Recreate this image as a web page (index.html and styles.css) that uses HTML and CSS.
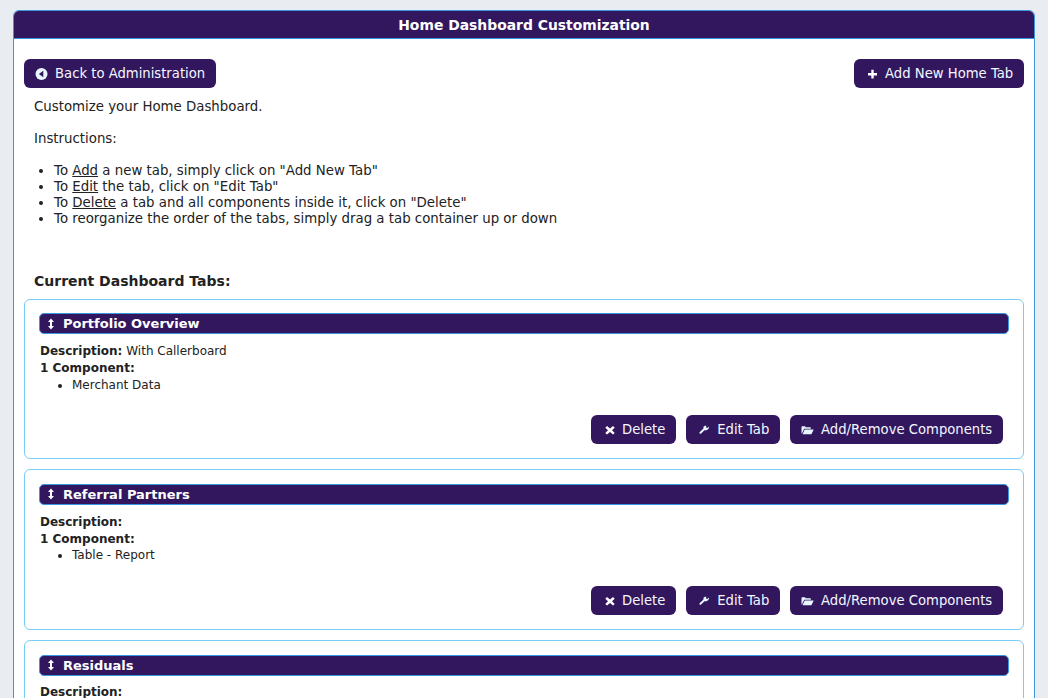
FILE: index.html
```html
<!DOCTYPE html>
<html lang="en">
<head>
<meta charset="utf-8">
<title>Home Dashboard Customization</title>
<link rel="stylesheet" href="styles.css">
</head>
<body>
<main class="panel">
  <h1 class="panel-title">Home Dashboard Customization</h1>
  <div class="panel-body">
    <div class="top-actions">
      <button class="btn"><svg class="icon" viewBox="0 0 13 12"><circle cx="6.500" cy="6" r="6" fill="#e8f6ff"/><path d="M8.300 2.800v6.400L3.900 6z" fill="#32175f"/></svg>Back to Administration</button>
      <button class="btn"><svg class="icon" viewBox="0 0 13 12"><path d="M6.300 1.800h2.400V5H12v2.400H8.700v3.200H6.300V7.400H3V5h3.300z" fill="#fff"/></svg>Add New Home Tab</button>
    </div>
    <div class="intro">
      <p>Customize your Home Dashboard.</p>
      <p>Instructions:</p>
      <ul>
        <li>To <u>Add</u> a new tab, simply click on "Add New Tab"</li>
        <li>To <u>Edit</u> the tab, click on "Edit Tab"</li>
        <li>To <u>Delete</u> a tab and all components inside it, click on "Delete"</li>
        <li>To reorganize the order of the tabs, simply drag a tab container up or down</li>
      </ul>
    </div>
    <h2 class="section-title">Current Dashboard Tabs:</h2>

    <section class="card">
      <h3 class="card-title"><svg class="drag" viewBox="0 0 8 12"><path d="M4 .5 7 4H5v4h2l-3 3.500L1 8h2V4H1z" fill="#fff"/></svg>Portfolio Overview</h3>
      <div class="card-text"><b>Description:</b> With Callerboard</div>
      <div class="card-text"><b>1 Component:</b></div>
      <ul class="components"><li>Merchant Data</li></ul>
      <div class="card-actions">
        <button class="btn"><svg class="icon" viewBox="0 0 13 12"><path d="M5 2 8 4.600 11 2l1.700 1.700L10 6.300l2.700 2.600-1.700 1.700L8 8l-3 2.600-1.700-1.700L6 6.300 3.300 3.700z" fill="#fff"/></svg>Delete</button>
        <button class="btn"><svg class="icon" viewBox="0 0 13 12"><path d="M12 2.400 10.200 4.100 9 3.600l.3-1.800C8.100 1.400 6.900 2 6.500 3.100c-.2.500-.1 1 0 1.400L2.800 8c-.5.500-.5 1.100-.1 1.500.4.400 1 .4 1.400-.1L7.500 6.200c1.400.4 2.900-.2 3.800-1.300.6-.7.800-1.600.7-2.500z" fill="#e8f6ff"/></svg>Edit Tab</button>
        <button class="btn"><svg class="icon" viewBox="0 0 13 12"><path d="M.5 9.500V3c0-.5.300-.8.700-.8h2.700l1 1h4.300c.4 0 .7.300.7.700v.9H3.200L.9 9.500z" fill="#e8f6ff"/><path d="M3.700 5.400h9l-2.300 4.800H1.500z" fill="#e8f6ff"/></svg>Add/Remove Components</button>
      </div>
    </section>

    <section class="card">
      <h3 class="card-title"><svg class="drag" viewBox="0 0 8 12"><path d="M4 .5 7 4H5v4h2l-3 3.500L1 8h2V4H1z" fill="#fff"/></svg>Referral Partners</h3>
      <div class="card-text"><b>Description:</b></div>
      <div class="card-text"><b>1 Component:</b></div>
      <ul class="components"><li>Table - Report</li></ul>
      <div class="card-actions">
        <button class="btn"><svg class="icon" viewBox="0 0 13 12"><path d="M5 2 8 4.600 11 2l1.700 1.700L10 6.300l2.700 2.600-1.700 1.700L8 8l-3 2.600-1.700-1.700L6 6.300 3.300 3.700z" fill="#fff"/></svg>Delete</button>
        <button class="btn"><svg class="icon" viewBox="0 0 13 12"><path d="M12 2.400 10.200 4.100 9 3.600l.3-1.800C8.100 1.400 6.900 2 6.500 3.100c-.2.500-.1 1 0 1.400L2.800 8c-.5.500-.5 1.100-.1 1.500.4.400 1 .4 1.400-.1L7.500 6.200c1.400.4 2.900-.2 3.800-1.300.6-.7.800-1.600.7-2.500z" fill="#e8f6ff"/></svg>Edit Tab</button>
        <button class="btn"><svg class="icon" viewBox="0 0 13 12"><path d="M.5 9.500V3c0-.5.300-.8.700-.8h2.700l1 1h4.300c.4 0 .7.300.7.700v.9H3.200L.9 9.500z" fill="#e8f6ff"/><path d="M3.700 5.400h9l-2.300 4.800H1.500z" fill="#e8f6ff"/></svg>Add/Remove Components</button>
      </div>
    </section>

    <section class="card">
      <h3 class="card-title"><svg class="drag" viewBox="0 0 8 12"><path d="M4 .5 7 4H5v4h2l-3 3.500L1 8h2V4H1z" fill="#fff"/></svg>Residuals</h3>
      <div class="card-text"><b>Description:</b></div>
    </section>
  </div>
</main>
</body>
</html>
```

FILE: styles.css
```css
* { box-sizing: border-box; }
html, body { height: 698px; overflow: hidden; }
body {
  margin: 0;
  background: #e9edf2;
  font-family: "DejaVu Sans", Verdana, sans-serif;
  font-size: 13.33px;
  line-height: 16px;
  color: #222;
}
.panel {
  margin: 10px 13px 0;
  width: 1022px;
  border: 1px solid #3a96de;
  border-radius: 6px 6px 0 0;
  background: #fff;
}
.panel-title {
  margin: 0;
  height: 28px;
  background: #32175f;
  border-bottom: 1px solid #3a96de;
  border-radius: 5px 5px 0 0;
  color: #fff;
  font-size: 13.9px;
  font-weight: 700;
  line-height: 28px;
  text-align: center;
}
.panel-body { padding: 20px 10px 0; }
.top-actions { display: flex; justify-content: space-between; }
.btn {
  display: inline-flex;
  align-items: center;
  height: 29px;
  padding: 0 10.8px 0 11px;
  border: 0;
  border-radius: 6px;
  background: #32175f;
  color: #f4f8ff;
  font: 13.2px/16px "DejaVu Sans", Verdana, sans-serif;
}
.icon { width: 13px; height: 12px; margin-right: 7px; flex: none; }
.intro { padding: 11px 10px 0; }
.intro p { margin: 0 0 16px; }
.intro ul { margin: 0; padding-left: 20px; }
.section-title {
  margin: 45px 10px 8.8px;
  font-size: 14px;
  font-weight: 700;
  line-height: 18px;
}
.card {
  height: 160.6px;
  margin-bottom: 10px;
  padding: 13.6px 14px 0;
  border: 1px solid #79cdf5;
  border-radius: 6px;
  background: #fff;
}
.card-title {
  display: flex;
  align-items: center;
  height: 21px;
  margin: 0 0 8.6px;
  padding-left: 7px;
  border: 1px solid #3a96de;
  border-radius: 5px;
  background: #32175f;
  color: #fff;
  font-size: 13px;
  font-weight: 700;
  line-height: 19px;
}
.drag { width: 8px; height: 12px; margin-right: 8px; flex: none; }
.card-text { padding-left: 1px; font-size: 12px; line-height: 17px; }
.components { margin: -0.2px 0 0; padding-left: 33px; font-size: 12px; line-height: 17px; }
.card-actions {
  display: flex;
  justify-content: flex-end;
  gap: 10px;
  margin-top: 21.2px;
  padding-right: 6px;
}
.card-actions .btn { padding-top: 1px; }
```
